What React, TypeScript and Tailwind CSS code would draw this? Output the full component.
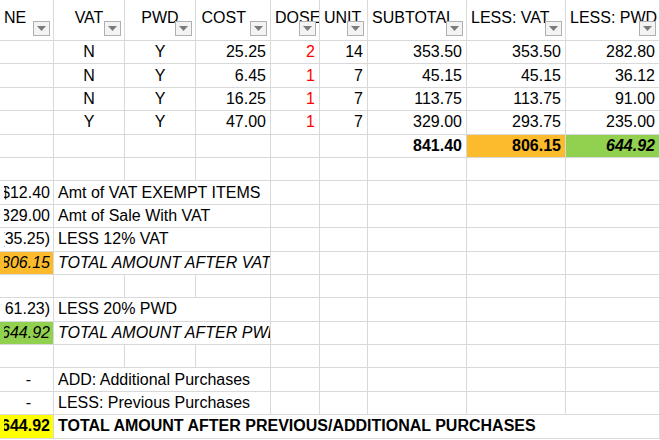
const widths = [54, 71, 71, 75, 49, 48, 99, 99, 94];
const font = { fontFamily: '"Liberation Sans", Arial, sans-serif' };

function Drop() {
    return (
        <span className="absolute right-[3px] bottom-[4px] w-[17px] h-[15px] bg-[#f3f3f3] border border-[#b0b0b0] flex items-center justify-center">
            <svg width="9" height="5" viewBox="0 0 9 5"><path d="M0 0h9L4.5 5z" fill="#7a7a7a" /></svg>
        </span>
    );
}

const headers = ['NE', 'VAT', 'PWD', 'COST', 'DOSE', 'UNIT', 'SUBTOTAL', 'LESS: VAT', 'LESS: PWD'];
const headAlign = ['text-left -ml-[6px]', 'text-center', 'text-center', 'text-right pr-[24px]', 'text-left', 'text-left', 'text-right pr-[20px]', 'text-right pr-[22px]', 'text-right pr-[18px]'];

const data = [
    ['N', 'Y', '25.25', '2', '14', '353.50', '353.50', '282.80'],
    ['N', 'Y', '6.45', '1', '7', '45.15', '45.15', '36.12'],
    ['N', 'Y', '16.25', '1', '7', '113.75', '113.75', '91.00'],
    ['Y', 'Y', '47.00', '1', '7', '329.00', '293.75', '235.00'],
];

const td = 'border border-[#d9d9d9] h-[23.4px] py-0 px-[4px] leading-[20px] whitespace-nowrap overflow-hidden';

function Empty({ n = 9 }: { n?: number }) {
    return <>{Array.from({ length: n }).map((_, i) => <td key={i} className={td} />)}</>;
}

function Summary({ val, label, cls = '', labelCls = '', span = 3 }: { val: string; label: string; cls?: string; labelCls?: string; span?: number }) {
    return (
        <tr>
            <td className={`${td} pr-[3px] ${cls}`}>
                <div className="flex justify-end overflow-hidden"><span className="shrink-0">{val}</span></div>
            </td>
            <td colSpan={span} className={`${td} ${labelCls}`}>{label}</td>
            <Empty n={8 - span} />
        </tr>
    );
}

export default function App() {
    return (
        <div className="w-[660px] h-[440px] overflow-hidden bg-white text-black text-[16px]" style={font}>
            <table className="table-fixed border-collapse -mt-px -ml-px" style={{ width: 661 }}>
                <colgroup>
                    {widths.map((w, i) => <col key={i} style={{ width: w }} />)}
                </colgroup>
                <tbody>
                    <tr>
                        {headers.map((h, i) => (
                            <td key={i} className={`${td} h-[41px] relative align-bottom pb-[12px] ${headAlign[i]}`}>
                                {h}
                                <Drop />
                            </td>
                        ))}
                    </tr>
                    {data.map((r, i) => (
                        <tr key={i}>
                            <td className={td} />
                            <td className={`${td} text-center`}>{r[0]}</td>
                            <td className={`${td} text-center`}>{r[1]}</td>
                            <td className={`${td} text-right`}>{r[2]}</td>
                            <td className={`${td} text-right text-[#ff0000]`}>{r[3]}</td>
                            <td className={`${td} text-right`}>{r[4]}</td>
                            <td className={`${td} text-right`}>{r[5]}</td>
                            <td className={`${td} text-right`}>{r[6]}</td>
                            <td className={`${td} text-right`}>{r[7]}</td>
                        </tr>
                    ))}
                    <tr>
                        <Empty n={6} />
                        <td className={`${td} text-right font-bold`}>841.40</td>
                        <td className={`${td} text-right font-bold bg-[#fbbb2c]`}>806.15</td>
                        <td className={`${td} text-right font-bold italic bg-[#92d050]`}>644.92</td>
                    </tr>
                    <tr><Empty /></tr>
                    <Summary val="$12.40" label="Amt of VAT EXEMPT ITEMS" />
                    <Summary val="$329.00" label="Amt of Sale With VAT" />
                    <Summary val="(35.25)" label="LESS 12% VAT" />
                    <Summary val="806.15" label="TOTAL AMOUNT AFTER VAT" cls="italic bg-[#fbbb2c]" labelCls="italic" />
                    <tr><Empty /></tr>
                    <Summary val="(161.23)" label="LESS 20% PWD" />
                    <Summary val="644.92" label="TOTAL AMOUNT AFTER PWD" cls="italic bg-[#92d050]" labelCls="italic" />
                    <tr><Empty /></tr>
                    <tr>
                        <td className={`${td} text-right pr-[22px]`}>-</td>
                        <td colSpan={3} className={td}>ADD: Additional Purchases</td>
                        <Empty n={5} />
                    </tr>
                    <tr>
                        <td className={`${td} text-right pr-[22px]`}>-</td>
                        <td colSpan={3} className={td}>LESS: Previous Purchases</td>
                        <Empty n={5} />
                    </tr>
                    <Summary val="644.92" label="TOTAL AMOUNT AFTER PREVIOUS/ADDITIONAL PURCHASES" cls="font-bold bg-[#ffff00]" labelCls="font-bold" span={8} />
                </tbody>
            </table>
        </div>
    );
}
